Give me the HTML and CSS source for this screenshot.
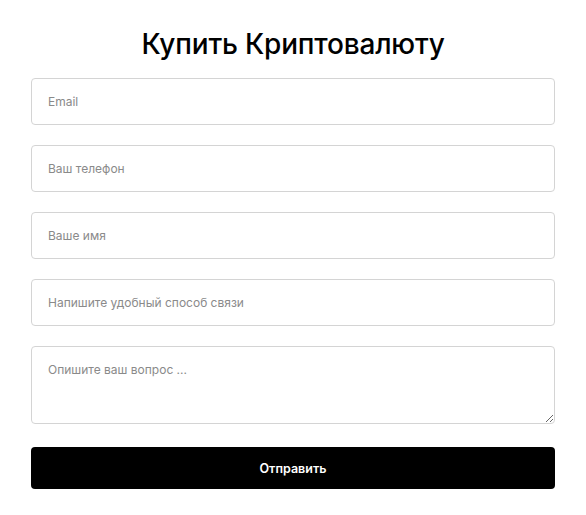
FILE: index.html
```html
<!DOCTYPE html>
<html lang="ru">
<head>
  <meta charset="UTF-8">
  <meta name="viewport" content="width=device-width, initial-scale=1.0">
  <title>Купить Криптовалюту</title>
  <link rel="stylesheet" href="styles.css">
</head>
<body>
  <div class="container">
    <h2>Купить Криптовалюту</h2>
    <form class="form" onsubmit="return false">
      <input type="email" placeholder="Email">
      <input type="text" placeholder="Ваш телефон">
      <input type="text" placeholder="Ваше имя">
      <input type="text" placeholder="Напишите удобный способ связи">
      <textarea placeholder="Опишите ваш вопрос ..."></textarea>
      <button type="submit">Отправить</button>
    </form>
  </div>
</body>
</html>
```

FILE: styles.css
```css
* { box-sizing: border-box; margin: 0; padding: 0; }
body { font-family: Inter, 'Noto Sans', sans-serif; background: #fff; color: #000; }
.container { width: 524px; margin: 0 auto; padding-top: 26px; }
h2 { text-align: center; font-size: 28px; font-weight: 500; line-height: 36px; margin-bottom: 16px; letter-spacing: -0.2px; }
.form { display: flex; flex-direction: column; gap: 20px; }
input, textarea {
  width: 100%; height: 47px; padding: 0 16px;
  border: 1px solid #d4d4d4; border-radius: 4px;
  font-family: inherit; font-size: 12px; color: #333;
  background: #fff; outline: none;
}
textarea { height: 78px; padding: 15px 16px; resize: vertical; }
input::placeholder, textarea::placeholder { color: #8a8a8a; }
button {
  width: 100%; height: 42px; margin-top: 3px;
  background: #000; color: #fff; border: none; border-radius: 4px;
  font-family: inherit; font-size: 12.5px; font-weight: 600; cursor: pointer;
}
```
